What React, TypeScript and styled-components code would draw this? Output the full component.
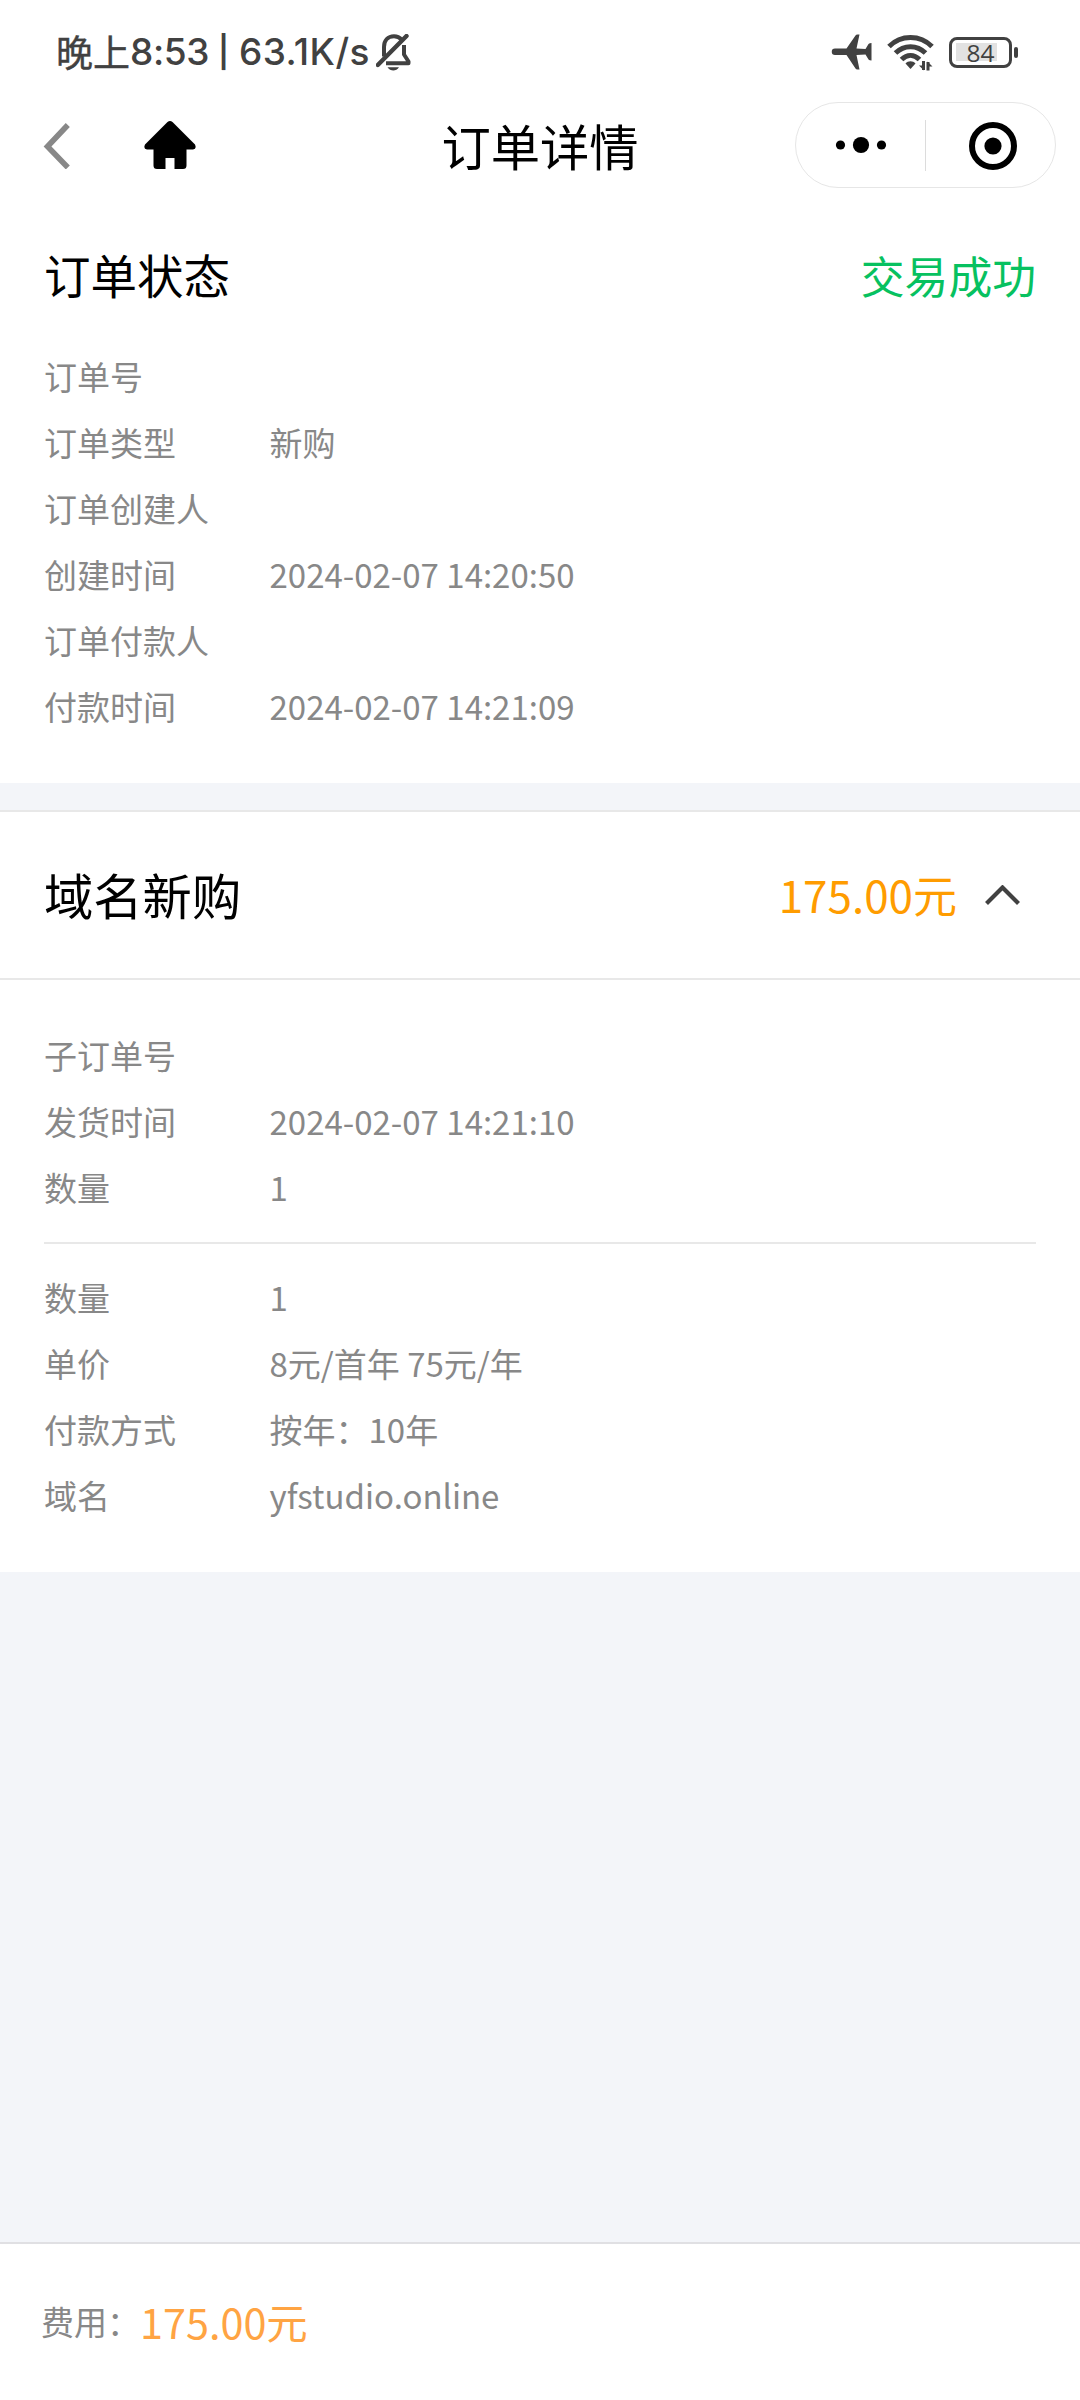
import React from 'react';
import styled, { createGlobalStyle } from 'styled-components';

const Global = createGlobalStyle`
  body { margin: 0; background: #f3f5f9; }
  * { box-sizing: border-box; }
`;

const Page = styled.div`
  width: 1080px;
  height: 2400px;
  display: flex;
  flex-direction: column;
  background: #f3f5f9;
  font-family: 'Noto Sans CJK SC', sans-serif;
  overflow: hidden;
`;

const StatusBar = styled.header`
  height: 100px;
  flex: none;
  padding: 4px 62px 0 56px;
  display: flex;
  align-items: center;
  background: #fff;
  color: #414141;
  svg { display: block; flex: none; }
`;

const Clock = styled.div`
  display: flex;
  align-items: center;
  flex: 1;
  font-size: 37px;
  line-height: 54px;
  white-space: pre;
`;

const Period = styled.span`
  width: 74px;
  margin-bottom: 3px;
  -webkit-text-stroke: 0.4px #414141;
`;

const Latin = styled.span<{ $width: number; $spacing?: number }>`
  font-family: Inter, sans-serif;
  font-weight: 450;
  width: ${(p) => p.$width}px;
  letter-spacing: ${(p) => p.$spacing ?? -0.6}px;
`;

const Bar = styled.span`
  font-family: Inter, sans-serif;
  font-size: 31px;
  font-weight: 600;
  width: 21px;
  margin-left: -1px;
`;

const StatusIcons = styled.div`
  display: flex;
  align-items: center;
  gap: 15px;
`;

const BatteryWrap = styled.div`
  display: flex;
  align-items: center;
  gap: 2px;
`;

const BatteryShell = styled.div`
  width: 63px;
  height: 31px;
  border: 3px solid #414141;
  border-radius: 8px;
  display: flex;
  align-items: center;
  justify-content: center;
  background: linear-gradient(#e2e2e2, #e2e2e2) 4px center / 41px 18px no-repeat;
  font-family: 'Open Sans', sans-serif;
  font-size: 24.5px;
  line-height: 25px;
`;

const BatteryTip = styled.div`
  width: 4px;
  height: 11px;
  border-radius: 2px;
  background: #414141;
`;

const NavBar = styled.nav`
  height: 92px;
  flex: none;
  display: grid;
  grid-template-columns: 1fr auto 1fr;
  align-items: center;
  background: #fff;
  padding: 0 24px 2px;
  svg { display: block; }
`;

const NavLeft = styled.div`
  display: flex;
  align-items: center;
  gap: 73px;
  margin-left: 19px;
`;

const NavTitle = styled.h1`
  margin: 0 0 1px;
  font-size: 49.3px;
  line-height: 70px;
  font-weight: 400;
  color: #000;
`;

const Capsule = styled.div`
  justify-self: end;
  width: 261px;
  height: 86px;
  border: 1px solid #e6e6e6;
  border-radius: 43px;
  display: flex;
  align-items: center;
`;

const CapsuleHalf = styled.div<{ $shift?: number }>`
  width: 129px;
  display: flex;
  justify-content: center;
  padding-left: ${(p) => p.$shift ?? 0}px;
`;

const CapsuleRule = styled.div`
  width: 1px;
  height: 51px;
  background: #dcdcdc;
`;

const StatusSection = styled.section`
  height: 591px;
  flex: none;
  background: #fff;
  padding: 47px 44px 0;
`;

const SectionHead = styled.div`
  display: flex;
  align-items: center;
  justify-content: space-between;
  height: 70px;
  margin-bottom: 34px;
`;

const Heading = styled.h2<{ $size: number }>`
  margin: 0;
  font-size: ${(p) => p.$size}px;
  line-height: 70px;
  font-weight: 400;
  color: #000;
`;

const State = styled.span`
  padding-top: 2px;
  font-size: 43.8px;
  line-height: 70px;
  color: #07c160;
`;

const Row = styled.div`
  display: flex;
  height: 66px;
  align-items: center;
  font-size: 33px;
  color: #888;
  white-space: pre;
`;

const RowLabel = styled.span`
  width: 225.5px;
  flex: none;
`;

const SubOrder = styled.section`
  margin-top: 27px;
  height: 762px;
  flex: none;
  background: #fff;
  border-top: 2px solid #e8e8e8;
`;

const SubHead = styled.div`
  height: 168px;
  padding: 0 60px 2px 44px;
  display: flex;
  align-items: center;
  border-bottom: 2px solid #e8e8e8;
  svg { display: block; margin: 2px 0 0 28px; }
`;

const Price = styled.span<{ $size: number; $color: string }>`
  font-size: ${(p) => p.$size}px;
  line-height: 70px;
  color: ${(p) => p.$color};
`;

const Spacer = styled.div`
  flex: 1;
`;

const Details = styled.div`
  padding: 42px 44px 0;
`;

const Divider = styled.div`
  height: 2px;
  background: #e8e8e8;
  margin: 22px 0 20px;
`;

const Footer = styled.footer`
  height: 158px;
  flex: none;
  padding: 0 41px 3px;
  display: flex;
  align-items: center;
  background: #fff;
  border-top: 2px solid #e0e0e3;
`;

const FooterLabel = styled.span`
  font-size: 33px;
  line-height: 70px;
  color: #888;
`;

const BellOff = () => (
  <svg width="36" height="37" viewBox="0 0 36 37" fill="none" stroke="#414141" strokeWidth="4">
    <path d="M8 22.500V13C8 6.500 12 2.200 18 2.200C21 2.200 23.500 3.200 25.500 5.500" />
    <path d="M28 11V20.500L32.500 27.500V29.300H10" strokeLinejoin="round" />
    <path d="M1.800 31L30.500 2" strokeWidth="4.400" strokeLinecap="round" />
    <path d="M11.500 33.300H23C21.500 35.500 19.500 36.500 17.300 36.500S13 35.500 11.500 33.300Z" fill="#414141" stroke="none" />
  </svg>
);

const Plane = () => (
  <svg width="41" height="36" viewBox="0 0 41 36" fill="#414141">
    <path d="M4 14.500H15.500L24.500 1.500Q25 0.500 26.500 0.500H28.500L25.500 14.500L34.500 15L37.500 10Q38.500 9 40.500 9V26.500Q38.500 26.500 37.500 25.500L34.500 20.500L25.500 21L28.500 35.500H26.500Q25 35.500 24.500 34.500L15.500 21H4A3.250 3.250 0 0 1 4 14.500Z" />
  </svg>
);

const Wifi = () => (
  <svg width="47" height="37" viewBox="0 0 47 37" fill="none" stroke="#414141" strokeWidth="5">
    <path d="M2 12.500C14 0.500 33 0.500 45 12.500" />
    <path d="M8.500 19C17 10.500 30 10.500 38.500 19" />
    <path d="M14.500 25.500C20 20 27 20 32.500 25.500" />
    <path d="M18.500 29.500C21 26.500 26 26.500 28.500 29.500L23.500 35Z" fill="#414141" stroke="none" />
    <path d="M36.500 27V36M41 36.500V28" strokeWidth="3" />
    <path d="M32 31.500H37V36.500ZM45.500 32.500H40.500V27.500Z" fill="#414141" stroke="none" />
  </svg>
);

const Battery = () => (
  <BatteryWrap>
    <BatteryShell>84</BatteryShell>
    <BatteryTip />
  </BatteryWrap>
);

const BackArrow = () => (
  <svg width="28" height="48" viewBox="0 0 28 48" fill="none" stroke="#888" strokeWidth="5.600">
    <path d="M24.800 4L4.500 25.500L24.800 46.500" />
  </svg>
);

const HomeIcon = () => (
  <svg width="52" height="48" viewBox="0 0 52 48">
    <path d="M23.500 1Q26 -1 28.500 1L51 23.500Q53 28 49 28.500H42.500V44.500Q42.500 48 39 48H30.500V37H21.500V48H13Q9.500 48 9.500 44.500V28.500H3Q-1 28 1 23.500Z" />
  </svg>
);

const Dots = () => (
  <svg width="52" height="18" viewBox="0 0 52 18">
    <circle cx="5.500" cy="9" r="4.600" />
    <circle cx="26" cy="9" r="8.100" />
    <circle cx="46.500" cy="9" r="4.600" />
  </svg>
);

const Target = () => (
  <svg width="50" height="50" viewBox="0 0 50 50">
    <circle cx="25" cy="26" r="21" fill="none" stroke="#000" strokeWidth="6" />
    <circle cx="25" cy="26" r="8.600" />
  </svg>
);

const ChevronUp = () => (
  <svg width="35" height="20" viewBox="0 0 35 20" fill="none" stroke="#414141" strokeWidth="4.200">
    <path d="M1.500 18.500L17.500 2.500L33.500 18.500" />
  </svg>
);

type Field = [string, string];

const orderFields: Field[] = [
  ['订单号', ''],
  ['订单类型', '新购'],
  ['订单创建人', ''],
  ['创建时间', '2024-02-07 14:20:50'],
  ['订单付款人', ''],
  ['付款时间', '2024-02-07 14:21:09'],
];

const subFields: Field[] = [
  ['子订单号', ''],
  ['发货时间', '2024-02-07 14:21:10'],
  ['数量', '1'],
];

const itemFields: Field[] = [
  ['数量', '1'],
  ['单价', '8元/首年 75元/年'],
  ['付款方式', '按年：10年'],
  ['域名', 'yfstudio.online'],
];

const Rows = ({ fields }: { fields: Field[] }) => (
  <>
    {fields.map(([label, value]) => (
      <Row key={label}>
        <RowLabel>{label}</RowLabel>
        <span>{value}</span>
      </Row>
    ))}
  </>
);

export default function App() {
  return (
    <Page>
      <Global />
      <StatusBar>
        <Clock>
          <Period>晚上</Period>
          <Latin $width={89} $spacing={-0.4}>8:53</Latin>
          <Bar>|</Bar>
          <Latin $width={137} $spacing={0.4}>63.1K/s</Latin>
          <BellOff />
        </Clock>
        <StatusIcons>
          <Plane />
          <Wifi />
          <Battery />
        </StatusIcons>
      </StatusBar>
      <NavBar>
        <NavLeft>
          <BackArrow />
          <HomeIcon />
        </NavLeft>
        <NavTitle>订单详情</NavTitle>
        <Capsule>
          <CapsuleHalf><Dots /></CapsuleHalf>
          <CapsuleRule />
          <CapsuleHalf $shift={4}><Target /></CapsuleHalf>
        </Capsule>
      </NavBar>
      <StatusSection>
        <SectionHead>
          <Heading $size={46.5}>订单状态</Heading>
          <State>交易成功</State>
        </SectionHead>
        <Rows fields={orderFields} />
      </StatusSection>
      <SubOrder>
        <SubHead>
          <Heading $size={49.3}>域名新购</Heading>
          <Spacer />
          <Price $size={44} $color="#ff9c00">175.00元</Price>
          <ChevronUp />
        </SubHead>
        <Details>
          <Rows fields={subFields} />
          <Divider />
          <Rows fields={itemFields} />
        </Details>
      </SubOrder>
      <Spacer />
      <Footer>
        <FooterLabel>费用：</FooterLabel>
        <Price $size={41.4} $color="#ffa443">175.00元</Price>
      </Footer>
    </Page>
  );
}
